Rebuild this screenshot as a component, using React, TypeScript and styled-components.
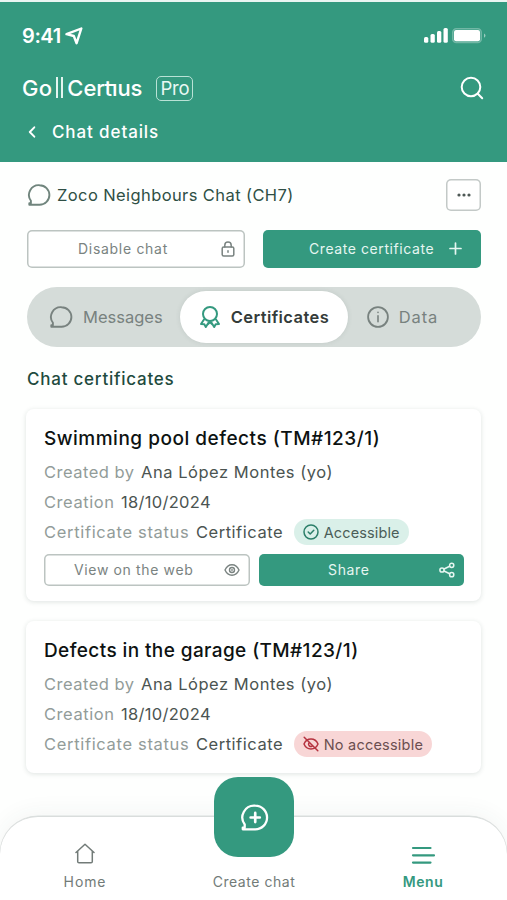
import React from "react";
import styled, { createGlobalStyle, css } from "styled-components";

const green = "#34997f";

const GlobalStyle = createGlobalStyle`
  * { box-sizing: border-box; }
  body { margin: 0; background: #fff; font-family: Inter, "Open Sans", sans-serif; }
  svg { display: block; flex: none; fill: none; stroke: currentColor; stroke-linecap: round; stroke-linejoin: round; }
  button { font-family: inherit; padding: 0; margin: 0; border: 0; background: none; }
`;

const Screen = styled.div`
  width: 507px;
  height: 900px;
  overflow: hidden;
  display: flex;
  flex-direction: column;
  background: #fefffe;
`;

const Text = styled.span<{ $size: number; $track?: number; $weight?: number; $color?: string }>`
  font-size: ${p => p.$size}px;
  letter-spacing: ${p => p.$track ?? 0}px;
  font-weight: ${p => p.$weight ?? 400};
  color: ${p => p.$color ?? "inherit"};
  white-space: nowrap;
`;

const Header = styled.header`
  height: 162px;
  flex: none;
  border-top: 2px solid #eaf5f2;
  background: ${green};
  color: #fff;
  padding: 20px 23px 0 22px;
`;

const HeaderRow = styled.div<{ $height: number }>`
  display: flex;
  align-items: center;
  height: ${p => p.$height}px;
`;

const StatusIcons = styled.div`
  display: flex;
  margin-left: auto;
  margin-right: -2px;
`;

const Arrow = styled.svg`
  margin-left: 4px;
`;

const LogoBars = styled.span`
  width: 7px;
  height: 21px;
  margin: -2px 4px 0 4px;
  border: solid #e4f5f0;
  border-width: 0 2px;
`;

/* Joins the "t" crossbar to a dotless "i" stem */
const Ligature = styled.span`
  position: relative;
  display: inline-block;
  &::before {
    content: "";
    position: absolute;
    right: 2px;
    top: 9.3px;
    width: 8px;
    height: 2px;
    background: #fff;
  }
  &::after {
    content: "";
    position: absolute;
    right: 0.3px;
    top: 3.5px;
    width: 5px;
    height: 5px;
    background: ${green};
  }
`;

const ProTag = styled.span`
  display: flex;
  align-items: center;
  justify-content: center;
  width: 37px;
  height: 25px;
  margin-left: 14px;
  border: 1.5px solid #b9e2d6;
  border-radius: 5px;
`;

const SearchIcon = styled.svg`
  margin-left: auto;
`;

const BackRow = styled.div`
  display: flex;
  align-items: center;
  height: 12px;
  gap: 15px;
  padding-left: 6px;
`;

const Content = styled.main`
  flex: 1;
  padding: 17px 26px 0 27px;
  display: flex;
  flex-direction: column;
`;

const TitleRow = styled.div`
  display: flex;
  align-items: center;
  height: 32px;
  gap: 6px;
  color: #2f4f45;
`;

const MoreButton = styled.button`
  display: flex;
  align-items: center;
  justify-content: center;
  width: 35px;
  height: 32px;
  margin-left: auto;
  border-radius: 5px;
  background: #fff;
  box-shadow: inset 0 0 0 1.5px #c3c9c7;
  color: #4f5956;
`;

const Actions = styled.div<{ $gap: number; $top: number }>`
  display: grid;
  grid-template-columns: 1fr 1fr;
  gap: ${p => p.$gap}px;
  margin-top: ${p => p.$top}px;
`;

const ActionButton = styled.button<{ $primary?: boolean; $small?: boolean; $padLeft: number; $padRight: number }>`
  display: flex;
  align-items: center;
  justify-content: space-between;
  height: ${p => (p.$small ? 32 : 38)}px;
  padding: 0 ${p => p.$padRight}px ${p => (p.$small ? 0 : 1)}px ${p => p.$padLeft}px;
  border-radius: 5px;
  ${p =>
    p.$primary
      ? css`background: ${green}; color: #e6f6f1;`
      : css`background: #fff; color: #7a8381; box-shadow: inset 0 0 0 1.5px #bcc4c1;`}
`;

const Tabs = styled.nav`
  display: flex;
  align-items: center;
  height: 60px;
  margin-top: 19px;
  padding-left: 22px;
  border-radius: 30px;
  background: #d5dcd9;
  color: #78827f;
`;

const Tab = styled.div<{ $active?: boolean }>`
  display: flex;
  align-items: center;
  gap: 10px;
  ${p =>
    p.$active
      ? css`
          width: 168px;
          height: 52px;
          margin: 0 19px 0 17px;
          padding-left: 19px;
          border-radius: 26px;
          background: #fff;
          color: ${green};
          box-shadow: 0 0 5px rgba(60, 80, 75, 0.12);
        `
      : css`height: 52px;`}
`;

const SectionTitle = styled.h2`
  display: flex;
  align-items: center;
  height: 30px;
  margin: 17px 0 15px;
  line-height: 1;
`;

const Card = styled.article`
  margin: 0 0 20px -1px;
  padding: 14px 17px 0 18px;
  border-radius: 8px;
  background: #fff;
  box-shadow: 0 1px 5px rgba(30, 60, 50, 0.14);
`;

const CardTitle = styled.h3`
  display: flex;
  align-items: center;
  height: 31px;
  margin: 0 0 3px;
  line-height: 1;
`;

const Field = styled.div`
  display: flex;
  align-items: center;
  height: 30px;
  gap: 6.5px;
  color: #4b5451;
`;

const FieldLabel = styled(Text)`
  color: #929c99;
`;

const Badge = styled.span<{ $width: number; $danger?: boolean }>`
  display: flex;
  align-items: center;
  gap: 5px;
  width: ${p => p.$width}px;
  height: 26px;
  margin-left: 4px;
  padding-left: 9px;
  border-radius: 13px;
  background: ${p => (p.$danger ? "#f8d6d6" : "#daf0e9")};
  color: ${p => (p.$danger ? "#b5323f" : "#2c7f69")};
`;

const BottomBar = styled.footer`
  position: relative;
  flex: none;
  height: 84px;
  display: grid;
  grid-template-columns: 1fr 1fr 1fr;
  border-top: 1.5px solid #d9dddc;
  border-radius: 38px 38px 0 0;
  background: #fff;
  box-shadow: 0 -2px 24px rgba(50, 70, 65, 0.06), 0 0 0 0.5px #e2e5e4;
`;

const NavItem = styled.div<{ $active?: boolean }>`
  display: flex;
  flex-direction: column;
  align-items: center;
  justify-content: space-between;
  padding: 26px 0 9px;
  color: ${p => (p.$active ? green : "#727b78")};
`;

const NavLabel = styled(Text)`
  line-height: 18px;
  padding-left: 1px;
`;

const CreateButton = styled.button`
  position: absolute;
  left: 214px;
  top: -40px;
  width: 80px;
  height: 80px;
  display: flex;
  align-items: center;
  justify-content: center;
  border-radius: 24px;
  background: ${green};
  color: #fff;
`;

const ChatIcon = ({ size = 24, color, plus, weight = 1.9 }: { size?: number; color?: string; plus?: boolean; weight?: number }) => (
  <svg width={size} height={size} viewBox="0 0 24 24" strokeWidth={weight} color={color}>
    <path d="M12.600 2.200a9.800 9.800 0 1 1 0 19.600H2.300v-1.500h1.600v-2.500A9.800 9.800 0 0 1 12.600 2.200Z" />
    {plus && <path d="M12.600 8.200v7.600M8.800 12h7.600" strokeWidth="2.2" />}
  </svg>
);

const EyeIcon = () => (
  <svg width="16" height="14" viewBox="0 0 16 14" strokeWidth="1.4">
    <path d="M1 7c1.6-3.5 4-5.2 7-5.2S13.400 3.500 15 7c-1.600 3.500-4 5.200-7 5.200S2.600 10.500 1 7Z" />
    <circle cx="8" cy="7" r="2.500" />
    <circle cx="8" cy="7" r=".3" />
  </svg>
);

const CertificateCard = ({ title, track, badge, children }: {
  title: string; track: number; badge: React.ReactNode; children: React.ReactNode;
}) => (
  <Card>
    <CardTitle><Text $size={19} $track={track} $weight={500} $color="#0d1211">{title}</Text></CardTitle>
    <Field>
      <FieldLabel $size={16.5} $track={0.49}>Created by</FieldLabel>
      <Text $size={16.5} $track={0.52}>Ana López Montes (yo)</Text>
    </Field>
    <Field>
      <FieldLabel $size={16.5} $track={0.55}>Creation</FieldLabel>
      <Text $size={16.5} $track={0.3}>18/10/2024</Text>
    </Field>
    <Field>
      <FieldLabel $size={16.5} $track={0.67}>Certificate status</FieldLabel>
      <Text $size={16.5} $track={0.54}>Certificate</Text>
      {badge}
    </Field>
    {children}
  </Card>
);

const CardActions = styled(Actions)`
  grid-template-columns: 206px 205px;
  padding-bottom: 15.5px;
`;

const CardEnd = styled.div`
  height: 14px;
`;

export default function App() {
  return (
    <Screen>
      <GlobalStyle />
      <Header>
        <HeaderRow $height={28}>
          <Text $size={20} $track={-0.4} $weight={600}>9:41</Text>
          <Arrow width="18" height="18" viewBox="0 0 18 18" strokeWidth="2.400">
            <path d="M16.300 1.500 1.500 7.200l7.300 1.800L11.600 16.200 16.300 1.500Z" />
          </Arrow>
          <StatusIcons>
            <svg width="62" height="16" viewBox="0 0 62 16" stroke="none">
              <g fill="#fff" stroke="none">
                <rect x="0" y="9" width="4.300" height="5.700" rx="1.500" />
                <rect x="6.500" y="6" width="4.300" height="8.700" rx="1.500" />
                <rect x="13" y="3" width="4.300" height="11.700" rx="1.500" />
                <rect x="19.500" y="0" width="4.300" height="14.700" rx="1.500" />
                <rect x="30" y="2" width="26" height="11.200" rx="2" />
                <path d="M60 5.500c2 .8 2 3.400 0 4.200Z" opacity=".5" />
              </g>
              <rect x="28.800" y="0.800" width="28.400" height="13.600" rx="3.500" stroke="#fff" strokeWidth="1.600" opacity=".3" />
            </svg>
          </StatusIcons>
        </HeaderRow>
        <HeaderRow $height={76}>
          <Text $size={22} $track={0.3} $weight={500}>Go</Text>
          <LogoBars />
          <Text $size={22} $track={-0.1} $weight={500}>Cer<Ligature>ti</Ligature>us</Text>
          <ProTag><Text $size={18.5} $track={-0.25} $color="#e9f8f4">Pro</Text></ProTag>
          <SearchIcon width="24" height="24" viewBox="0 0 24 24" strokeWidth="2">
            <circle cx="11" cy="11" r="9.300" />
            <path d="m17.800 17.800 4.400 4.400" />
          </SearchIcon>
        </HeaderRow>
        <BackRow>
          <svg width="9" height="12" viewBox="0 0 9 12" strokeWidth="1.900"><path d="M6.300 1.300 1.800 6l4.500 4.700" /></svg>
          <Text $size={17} $track={0.89} $weight={500}>Chat details</Text>
        </BackRow>
      </Header>

      <Content>
        <TitleRow>
          <ChatIcon color="#70857d" />
          <Text $size={16.5} $track={0.4}>Zoco Neighbours Chat (CH7)</Text>
          <MoreButton aria-label="More">
            <svg width="14" height="4" viewBox="0 0 14 4" stroke="none">
              <g fill="currentColor" stroke="none"><circle cx="2" cy="2" r="1.600" /><circle cx="7" cy="2" r="1.600" /><circle cx="12" cy="2" r="1.600" /></g>
            </svg>
          </MoreButton>
        </TitleRow>

        <Actions $gap={18} $top={19}>
          <ActionButton $padLeft={51} $padRight={10}>
            <Text $size={14} $track={0.7}>Disable chat</Text>
            <svg width="14" height="16" viewBox="0 0 14 16" strokeWidth="1.500">
              <rect x="1.200" y="6" width="11.600" height="9" rx="1.500" />
              <path d="M3.800 6V4.200a3.200 3.200 0 0 1 6.400 0V6M7 9.800v1.400" />
            </svg>
          </ActionButton>
          <ActionButton $primary $padLeft={46} $padRight={19}>
            <Text $size={14} $track={0.58}>Create certificate</Text>
            <svg width="13" height="13" viewBox="0 0 13 13" strokeWidth="1.700"><path d="M6.500 1v11M1 6.500h11" /></svg>
          </ActionButton>
        </Actions>

        <Tabs>
          <Tab>
            <ChatIcon />
            <Text $size={16.5} $track={0}>Messages</Text>
          </Tab>
          <Tab $active>
            <svg width="22" height="24" viewBox="0 0 22 24" strokeWidth="2">
              <circle cx="11" cy="9" r="7" />
              <path d="M5 14.500 2 19l3.300.2L6.800 22l3-4.800M17 14.500l3 4.500-3.300.2-1.500 2.800-3-4.800M8.500 19.500l2.500-2.300 2.500 2.300" />
            </svg>
            <Text $size={16.5} $track={0.42} $weight={600} $color="#343b39">Certificates</Text>
          </Tab>
          <Tab>
            <svg width="22" height="22" viewBox="0 0 22 22" strokeWidth="1.800">
              <circle cx="11" cy="11" r="9.900" />
              <path d="M11 9.800v6M11 6.300v.2" strokeWidth="1.600" />
            </svg>
            <Text $size={16.5} $track={0.9}>Data</Text>
          </Tab>
        </Tabs>

        <SectionTitle><Text $size={17} $track={0.76} $weight={500} $color="#1f4b3e">Chat certificates</Text></SectionTitle>

        <CertificateCard
          title="Swimming pool defects (TM#123/1)"
          track={0.51}
          badge={
            <Badge $width={115}>
              <svg width="16" height="16" viewBox="0 0 16 16" strokeWidth="1.500">
                <circle cx="8" cy="8" r="7" />
                <path d="m5.200 8 2 2 3.600-3.800" />
              </svg>
              <Text $size={14.5} $track={0.13} $color="#4b5e58">Accessible</Text>
            </Badge>
          }
        >
          <CardActions $gap={9} $top={6.5}>
            <ActionButton $small $padLeft={30} $padRight={10}>
              <Text $size={14} $track={0.64}>View on the web</Text>
              <EyeIcon />
            </ActionButton>
            <ActionButton $small $primary $padLeft={69} $padRight={9}>
              <Text $size={14} $track={0.65}>Share</Text>
              <svg width="16" height="16" viewBox="0 0 16 16" strokeWidth="1.500">
                <circle cx="3" cy="8" r="2.100" /><circle cx="12.700" cy="3.300" r="2.100" /><circle cx="12.700" cy="12.700" r="2.100" />
                <path d="m5 7 5.700-2.700M5 9l5.700 2.700" />
              </svg>
            </ActionButton>
          </CardActions>
        </CertificateCard>

        <CertificateCard
          title="Defects in the garage (TM#123/1)"
          track={0.4}
          badge={
            <Badge $width={138} $danger>
              <svg width="16" height="16" viewBox="0 0 16 16" strokeWidth="1.500">
                <path d="M1 8c1.400-3.300 3.900-5 7-5s5.600 1.700 7 5c-1.400 3.300-3.900 5-7 5S2.400 11.300 1 8Z" />
                <path d="M5.700 7.300a2.400 2.400 0 0 0 3.200 3M1.200 1.200l13.600 13.600" />
              </svg>
              <Text $size={14.5} $track={0.22} $color="#6b4f50">No accessible</Text>
            </Badge>
          }
        >
          <CardEnd />
        </CertificateCard>
      </Content>

      <BottomBar>
        <NavItem>
          <svg width="20" height="21" viewBox="0 0 20 21" strokeWidth="1.500">
            <path d="M1 9.500 10 1.200l9 8.300M2.700 8v10.500c0 .8.500 1.300 1.300 1.300h12c.8 0 1.300-.5 1.300-1.300V8" />
          </svg>
          <NavLabel $size={14} $track={0.9}>Home</NavLabel>
        </NavItem>
        <NavItem>
          <span />
          <NavLabel $size={14} $track={0.55}>Create chat</NavLabel>
        </NavItem>
        <NavItem $active>
          <svg width="24" height="24" viewBox="0 0 24 24" strokeWidth="2.200">
            <path d="M2 5h17.500M2 12.300h21M2 19.600h17.500" />
          </svg>
          <NavLabel $size={14} $track={0.6} $weight={600}>Menu</NavLabel>
        </NavItem>
        <CreateButton aria-label="New chat"><ChatIcon size={29} plus weight={1.9} /></CreateButton>
      </BottomBar>
    </Screen>
  );
}
